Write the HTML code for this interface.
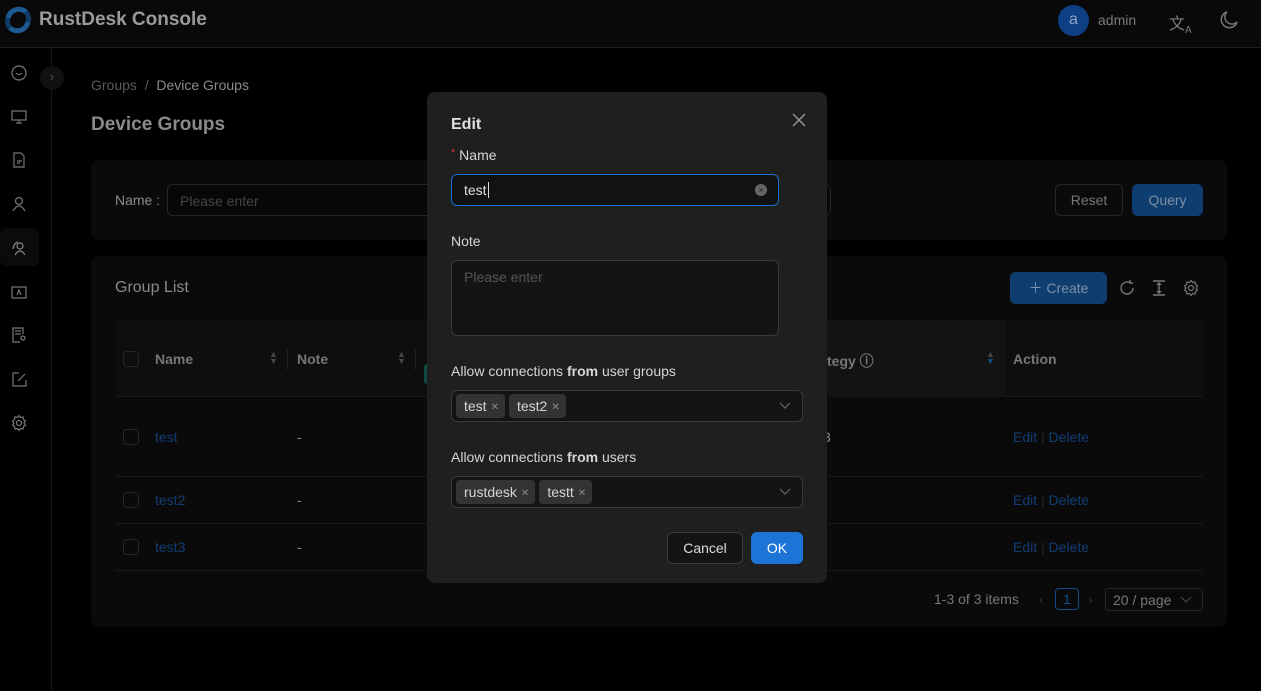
<!DOCTYPE html>
<html><head><meta charset="utf-8"><style>
*{box-sizing:border-box;margin:0;padding:0}
body{width:1261px;height:691px;overflow:hidden;background:#000;font-family:"Liberation Sans",sans-serif;font-size:14px;color:#8a8a8a;position:relative}
.abs{position:absolute}
.hdr{left:0;top:0;width:1261px;height:48px;background:#090909;border-bottom:1px solid #1e1e1e}
.side{left:0;top:48px;width:52px;height:643px;border-right:1px solid #1a1a1a;background:#000}
.card{background:#0a0a0a;border-radius:8px}
.inp{border:1px solid #262626;border-radius:6px;background:#070707}
.btn{border-radius:6px;text-align:center;line-height:30px}
.link{color:#123d75}
.modal{left:427px;top:92px;width:400px;height:491px;background:#1f1f1f;border-radius:8px;color:#d6d6d6}
.mi{border:1px solid #3a3a3a;border-radius:6px;background:#141414;position:absolute}
.tag{display:inline-block;background:#333;border-radius:4px;height:24px;line-height:24px;padding:0 6px 0 8px;margin-right:4px;color:#d6d6d6;font-size:14px}
.tag i{font-style:normal;color:#888;font-size:10px;margin-left:4px;vertical-align:1px}
.row{left:115px;width:1088px;border-bottom:1px solid #1a1a1a}
.cb{width:16px;height:16px;border:1px solid #262626;border-radius:4px}
svg{display:block}
</style></head><body>
<div class="abs hdr">
 <svg class="abs" style="left:4px;top:6px" width="28" height="28" viewBox="0 0 28 28"><path d="M22 6 A11 11 0 0 0 4 12" stroke="#1d5a92" stroke-width="5" fill="none"/><path d="M6 22 A11 11 0 0 0 24 16" stroke="#1d5a92" stroke-width="5" fill="none"/><path d="M24 16 A11 11 0 0 0 22 6" stroke="#0f3c66" stroke-width="5" fill="none"/><path d="M4 12 A11 11 0 0 0 6 22" stroke="#0f3c66" stroke-width="5" fill="none"/></svg>
 <div class="abs" style="left:39px;top:9px;font-size:19px;font-weight:bold;color:#9a9a9a">RustDesk Console</div>
 <div class="abs" style="left:1058px;top:5px;width:31px;height:31px;border-radius:50%;background:#0e3f85;color:#8fa6c8;text-align:center;line-height:30px;font-size:16px">a</div>
 <div class="abs" style="left:1098px;top:12px;color:#7a7a7a">admin</div>
 <div class="abs" style="left:1169px;top:10px;color:#7a7a7a;font-size:16px">文<sub style="font-size:10px">A</sub></div>
 <svg class="abs" style="left:1219px;top:10px" width="20" height="20" viewBox="0 0 20 20"><path d="M8 2 A8 8 0 1 0 18 12 A6.5 6.5 0 0 1 8 2Z" fill="none" stroke="#777" stroke-width="1.5"/></svg>
</div>
<div class="abs side">
 <svg class="abs" style="left:10px;top:16px" width="18" height="18" viewBox="0 0 18 18" fill="none" stroke="#777" stroke-width="1.2"><circle cx="9" cy="9" r="7"/><path d="M6 9 Q9 12 12 9"/></svg>
 <svg class="abs" style="left:10px;top:60px" width="18" height="18" viewBox="0 0 18 18" fill="none" stroke="#777" stroke-width="1.2"><rect x="2" y="3" width="14" height="9"/><path d="M9 12v3M6 15h6"/></svg>
 <svg class="abs" style="left:10px;top:103px" width="18" height="18" viewBox="0 0 18 18" fill="none" stroke="#777" stroke-width="1.2"><path d="M4 2h7l3 3v11H4z M7 10h5M7 12h3"/></svg>
 <svg class="abs" style="left:10px;top:147px" width="18" height="18" viewBox="0 0 18 18" fill="none" stroke="#777" stroke-width="1.2"><circle cx="9" cy="6" r="3.5"/><path d="M3 16 Q9 6 15 16"/></svg>
 <div class="abs" style="left:0;top:180px;width:39px;height:38px;background:#0b0b0b;border-radius:6px"></div>
 <svg class="abs" style="left:10px;top:191px" width="18" height="18" viewBox="0 0 18 18" fill="none" stroke="#888" stroke-width="1.2"><circle cx="10" cy="7" r="3"/><path d="M5 16 Q10 8 15 16M3 10 Q4 4 8 3"/></svg>
 <svg class="abs" style="left:10px;top:235px" width="18" height="18" viewBox="0 0 18 18" fill="none" stroke="#777" stroke-width="1.2"><rect x="2" y="4" width="14" height="11"/><path d="M7 12l2-5 2 5"/></svg>
 <svg class="abs" style="left:10px;top:278px" width="18" height="18" viewBox="0 0 18 18" fill="none" stroke="#777" stroke-width="1.2"><path d="M13 8V2H3v14h7M5 5h6M5 8h6"/><circle cx="13" cy="12" r="2"/></svg>
 <svg class="abs" style="left:10px;top:322px" width="18" height="18" viewBox="0 0 18 18" fill="none" stroke="#777" stroke-width="1.2"><path d="M9 3H3v13h13v-6M8 11l7-7"/></svg>
 <svg class="abs" style="left:10px;top:366px" width="18" height="18" viewBox="0 0 18 18" fill="none" stroke="#777" stroke-width="1.2"><circle cx="9" cy="9" r="2.5"/><path d="M9 1.5l1.5 2 2.5-.5.5 2.5 2 1.5-1.5 2 1.5 2-2 1.5-.5 2.5-2.5-.5-1.5 2-1.5-2-2.5.5-.5-2.5-2-1.5 1.5-2-1.5-2 2-1.5.5-2.5 2.5.5z"/></svg>
 <div class="abs" style="left:40px;top:18px;width:24px;height:24px;border-radius:50%;background:#111;color:#555;text-align:center;line-height:22px;font-size:13px">›</div>
</div>
<div class="abs" style="left:91px;top:77px;color:#5a5a5a">Groups &nbsp;/&nbsp; <span style="color:#8a8a8a">Device Groups</span></div>
<div class="abs" style="left:91px;top:114px;font-size:19px;font-weight:bold;color:#8a8a8a">Device Groups</div>
<div class="abs card" style="left:91px;top:160px;width:1136px;height:80px"></div>
<div class="abs" style="left:115px;top:192px;color:#8a8a8a">Name :</div>
<div class="abs inp" style="left:167px;top:184px;width:664px;height:32px"><span style="position:absolute;left:12px;top:8px;color:#444">Please enter</span></div>
<div class="abs btn" style="left:1055px;top:184px;width:68px;height:32px;border:1px solid #262626;color:#777">Reset</div>
<div class="abs btn" style="left:1132px;top:184px;width:71px;height:32px;background:#0e3d70;color:#7d8fa5;line-height:32px">Query</div>
<div class="abs card" style="left:91px;top:256px;width:1136px;height:371px"></div>
<div class="abs" style="left:115px;top:279px;font-size:16px;color:#8a8a8a">Group List</div>
<div class="abs btn" style="left:1010px;top:272px;width:97px;height:32px;background:#0e3d70;color:#7d8fa5;line-height:32px">＋ Create</div>
<svg class="abs" style="left:1118px;top:279px" width="18" height="18" viewBox="0 0 18 18" fill="none" stroke="#777" stroke-width="1.4"><path d="M15 9A6 6 0 1 1 12 3.8M12 1v3h3"/></svg>
<svg class="abs" style="left:1150px;top:279px" width="18" height="18" viewBox="0 0 18 18" fill="none" stroke="#777" stroke-width="1.4"><path d="M3 2h12M3 16h12M9 4v10M7 6l2-2 2 2M7 12l2 2 2-2"/></svg>
<svg class="abs" style="left:1182px;top:279px" width="18" height="18" viewBox="0 0 18 18" fill="none" stroke="#777" stroke-width="1.2"><circle cx="9" cy="9" r="2.5"/><path d="M9 1.5l1.5 2 2.5-.5.5 2.5 2 1.5-1.5 2 1.5 2-2 1.5-.5 2.5-2.5-.5-1.5 2-1.5-2-2.5.5-.5-2.5-2-1.5 1.5-2-1.5-2 2-1.5.5-2.5 2.5.5z"/></svg>
<div class="abs" style="left:115px;top:320px;width:1088px;height:77px;background:#0e0e0e;border-radius:8px 8px 0 0;border-bottom:1px solid #1a1a1a"></div>
<div class="abs" style="left:827px;top:320px;width:178px;height:77px;background:#131313"></div>
<div class="abs cb" style="left:123px;top:351px"></div>
<div class="abs" style="left:155px;top:351px;font-weight:bold;color:#777">Name</div>
<div class="abs" style="left:269px;top:351px;color:#444;font-size:9px;line-height:7px">▲<br>▼</div>
<div class="abs" style="left:287px;top:348px;width:1px;height:22px;background:#1e1e1e"></div>
<div class="abs" style="left:297px;top:351px;font-weight:bold;color:#777">Note</div>
<div class="abs" style="left:397px;top:351px;color:#444;font-size:9px;line-height:7px">▲<br>▼</div>
<div class="abs" style="left:415px;top:348px;width:1px;height:22px;background:#1e1e1e"></div>
<div class="abs" style="left:424px;top:364px;width:4px;height:20px;background:#0f4a44;border-radius:3px 0 0 3px"></div>
<div class="abs" style="left:827px;top:351px;font-weight:bold;color:#777">tegy ⓘ</div>
<div class="abs" style="left:986px;top:351px;font-size:9px;line-height:7px"><span style="color:#444">▲</span><br><span style="color:#124a8a">▼</span></div>
<div class="abs" style="left:1013px;top:351px;font-weight:bold;color:#777">Action</div>
<div class="abs row" style="top:397px;height:80px"></div>
<div class="abs row" style="top:477px;height:47px"></div>
<div class="abs row" style="top:524px;height:47px"></div>
<div class="abs cb" style="left:123px;top:429px"></div><div class="abs link" style="left:155px;top:429px">test</div><div class="abs" style="left:297px;top:429px">-</div><div class="abs" style="left:823px;top:429px">3</div>
<div class="abs cb" style="left:123px;top:492px"></div><div class="abs link" style="left:155px;top:492px">test2</div><div class="abs" style="left:297px;top:492px">-</div>
<div class="abs cb" style="left:123px;top:539px"></div><div class="abs link" style="left:155px;top:539px">test3</div><div class="abs" style="left:297px;top:539px">-</div>
<div class="abs link" style="left:1013px;top:429px">Edit <span style="color:#222">|</span> Delete</div>
<div class="abs link" style="left:1013px;top:492px">Edit <span style="color:#222">|</span> Delete</div>
<div class="abs link" style="left:1013px;top:539px">Edit <span style="color:#222">|</span> Delete</div>
<div class="abs" style="left:934px;top:591px;color:#777">1-3 of 3 items</div>
<div class="abs" style="left:1039px;top:591px;color:#333">‹</div>
<div class="abs" style="left:1055px;top:588px;width:24px;height:22px;border:1px solid #124a8a;border-radius:4px;color:#124a8a;text-align:center;line-height:20px">1</div>
<div class="abs" style="left:1088px;top:591px;color:#333">›</div>
<div class="abs" style="left:1105px;top:588px;width:98px;height:23px;border:1px solid #262626;border-radius:4px;color:#777;padding:3px 7px">20 / page</div>
<svg class="abs" style="left:1180px;top:594px" width="12" height="10" viewBox="0 0 12 10" fill="none" stroke="#444" stroke-width="1.2"><path d="M1 3l5 5 5-5"/></svg>

<div class="abs modal">
 <div class="abs" style="left:24px;top:24px;font-size:16px;font-weight:bold;color:#e0e0e0">Edit</div>
 <svg class="abs" style="left:365px;top:21px" width="14" height="14" viewBox="0 0 14 14" stroke="#999" stroke-width="1.4"><path d="M1 1l12 12M13 1L1 13"/></svg>
 <div class="abs" style="left:24px;top:55px"><span style="color:#c33;font-size:11px;vertical-align:top">*</span> Name</div>
 <div class="mi" style="left:24px;top:82px;width:328px;height:32px;border-color:#1a6fd0;background:#121212"><span style="position:absolute;left:12px;top:7px;color:#e0e0e0">test<span style="border-left:1px solid #ddd;margin-left:1px"></span></span><span style="position:absolute;right:11px;top:9px;width:12px;height:12px;border-radius:50%;background:#666;color:#222;font-size:9px;text-align:center;line-height:12px">×</span></div>
 <div class="abs" style="left:24px;top:141px">Note</div>
 <div class="mi" style="left:24px;top:168px;width:328px;height:76px"><span style="position:absolute;left:12px;top:8px;color:#555">Please enter</span></div>
 <div class="abs" style="left:24px;top:271px">Allow connections <b>from</b> user groups</div>
 <div class="mi" style="left:24px;top:298px;width:352px;height:32px;padding:3px 4px"><span class="tag">test<i>✕</i></span><span class="tag">test2<i>✕</i></span><svg style="position:absolute;right:11px;top:11px" width="12" height="8" viewBox="0 0 12 8" fill="none" stroke="#666" stroke-width="1.2"><path d="M1 1l5 5 5-5"/></svg></div>
 <div class="abs" style="left:24px;top:357px">Allow connections <b>from</b> users</div>
 <div class="mi" style="left:24px;top:384px;width:352px;height:32px;padding:3px 4px"><span class="tag">rustdesk<i>✕</i></span><span class="tag">testt<i>✕</i></span><svg style="position:absolute;right:11px;top:11px" width="12" height="8" viewBox="0 0 12 8" fill="none" stroke="#666" stroke-width="1.2"><path d="M1 1l5 5 5-5"/></svg></div>
 <div class="abs btn" style="left:240px;top:440px;width:76px;height:32px;border:1px solid #3a3a3a;background:#141414;color:#ddd">Cancel</div>
 <div class="abs btn" style="left:324px;top:440px;width:52px;height:32px;background:#1b74d6;color:#fff;line-height:32px">OK</div>
</div>
</body></html>
